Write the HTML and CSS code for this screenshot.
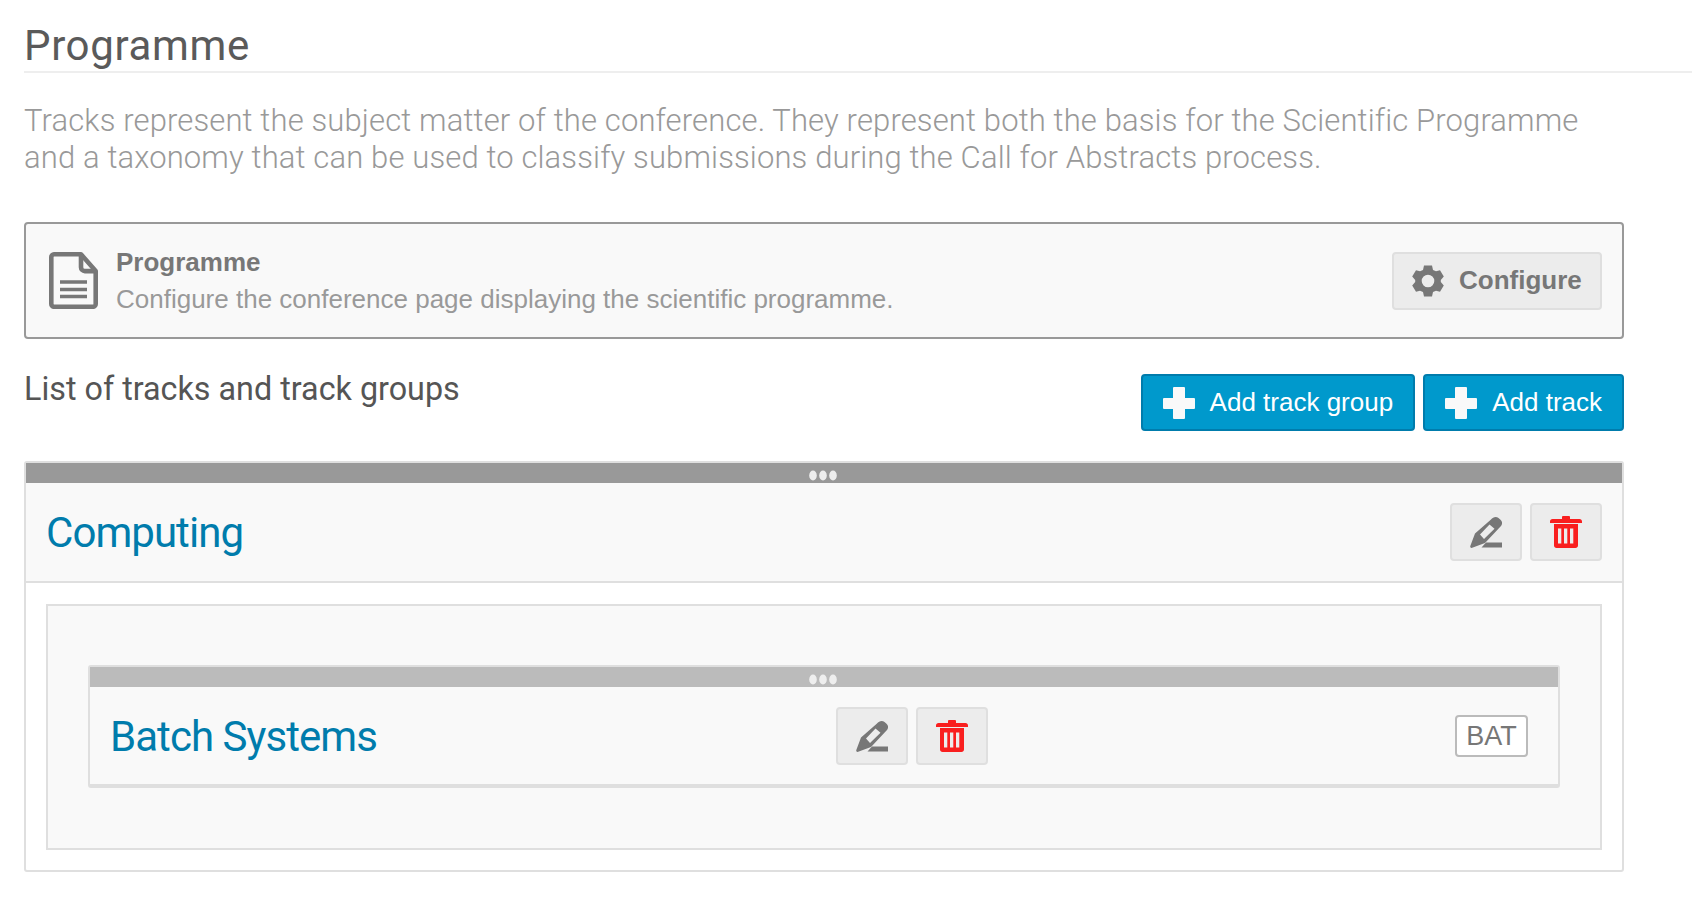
FILE: index.html
```html
<!DOCTYPE html>
<html lang="en">
<head>
<meta charset="utf-8">
<title>Programme</title>
<link rel="stylesheet" href="styles.css">
</head>
<body>
<main class="page">
  <h1 class="page-title">Programme</h1>
  <div class="content">
    <p class="intro">Tracks represent the subject matter of the conference. They represent both the basis for the Scientific Programme and a taxonomy that can be used to classify submissions during the Call for Abstracts process.</p>

    <section class="action-box">
      <svg class="doc-icon" viewBox="0 0 49 57"><path fill="none" stroke="#777" stroke-width="4.600" stroke-linejoin="round" d="M5 2.300h27l14.700 16.700v33a2.800 2.800 0 0 1-2.800 2.800H5a2.800 2.800 0 0 1-2.700-2.800V5a2.800 2.800 0 0 1 2.700-2.700z"/><path fill="none" stroke="#777" stroke-width="4.600" stroke-linejoin="round" d="M32 2.300v13a3.800 3.800 0 0 0 3.800 3.800h10.900"/><path stroke="#777" stroke-width="3.400" d="M11 30h27M11 37.500h27M11 44.500h27"/></svg>
      <div class="action-text">
        <div class="action-title">Programme</div>
        <div class="action-desc">Configure the conference page displaying the scientific programme.</div>
      </div>
      <button class="btn btn-config">
        <svg class="gear-icon" viewBox="0 0 32 32"><path fill="#777" fill-rule="evenodd" d="M12 .5L20 .5L21 5L24 6.200L28 5.200L31.800 11.500L28.800 15L28.800 17L31.800 20.500L28 26.800L24 25.800L21 27L20 31.500L12 31.500L11 27L8 25.800L4 26.800L.2 20.500L3.200 17L3.200 15L.2 11.500L4 5.200L8 6.200L11 5ZM16 9.700a6.300 6.300 0 1 0 0 12.600a6.300 6.300 0 0 0 0-12.600z"/></svg>
        Configure
      </button>
    </section>

    <div class="list-head">
      <h2 class="list-title">List of tracks and track groups</h2>
      <div class="list-actions">
        <button class="btn btn-primary"><svg class="plus-icon" viewBox="0 0 32 32"><path fill="#f9f9f9" d="M10 1a1 1 0 0 1 1-1h10a1 1 0 0 1 1 1v10h9a1 1 0 0 1 1 1v9a1 1 0 0 1-1 1h-9v9a1 1 0 0 1-1 1H11a1 1 0 0 1-1-1v-9H1a1 1 0 0 1-1-1v-9a1 1 0 0 1 1-1h9z"/></svg>Add track group</button>
        <button class="btn btn-primary"><svg class="plus-icon" viewBox="0 0 32 32"><path fill="#f9f9f9" d="M10 1a1 1 0 0 1 1-1h10a1 1 0 0 1 1 1v10h9a1 1 0 0 1 1 1v9a1 1 0 0 1-1 1h-9v9a1 1 0 0 1-1 1H11a1 1 0 0 1-1-1v-9H1a1 1 0 0 1-1-1v-9a1 1 0 0 1 1-1h9z"/></svg>Add track</button>
      </div>
    </div>

    <section class="group">
      <div class="handle handle-dark"><svg class="dots" viewBox="0 0 28 11"><ellipse cx="4" cy="5.500" rx="3.800" ry="5"/><ellipse cx="14" cy="5.500" rx="3.800" ry="5"/><ellipse cx="24" cy="5.500" rx="3.800" ry="5"/></svg></div>
      <div class="group-head">
        <a class="item-title">Computing</a>
        <div class="icon-btns">
          <button class="btn btn-icon"><svg class="icon" viewBox="0 0 32 32"><path fill="#777" fill-rule="evenodd" d="M21 3.500C23 1 26 0 28.500 2L30.500 3.800C32.500 5.500 32.500 8 31 10L15 27L1.500 32C.5 32 0 31 .3 30L5 17.500ZM10 18.500L19.500 8.500L24.500 12.800L14 23Z"/><path fill="#777" d="M16 26.500H32V31.500H11.500Z"/></svg></button>
          <button class="btn btn-icon"><svg class="icon" viewBox="0 0 32 32"><path fill="#f91f1f" fill-rule="evenodd" d="M13 0h6a1 1 0 0 1 1 1v2h9.500c1.500 0 2.500 1.200 2.500 2.500V7H0V5.500C0 4.200 1 3 2.500 3H12V1a1 1 0 0 1 1-1zM4 8h24v21.500c0 1.400-1.100 2.500-2.500 2.500h-19C5.100 32 4 30.900 4 29.500zM8 12.500v15h3.300v-15zm6 0v15h3.300v-15zm6 0v15h3.300v-15z"/></svg></button>
        </div>
      </div>
      <div class="group-body">
        <div class="track-list">
          <div class="track">
            <div class="handle handle-light"><svg class="dots" viewBox="0 0 28 11"><ellipse cx="4" cy="5.500" rx="3.800" ry="5"/><ellipse cx="14" cy="5.500" rx="3.800" ry="5"/><ellipse cx="24" cy="5.500" rx="3.800" ry="5"/></svg></div>
            <div class="track-row">
              <a class="item-title track-title">Batch Systems</a>
              <div class="icon-btns">
                <button class="btn btn-icon"><svg class="icon" viewBox="0 0 32 32"><path fill="#777" fill-rule="evenodd" d="M21 3.500C23 1 26 0 28.500 2L30.500 3.800C32.500 5.500 32.500 8 31 10L15 27L1.500 32C.5 32 0 31 .3 30L5 17.500ZM10 18.500L19.500 8.500L24.500 12.800L14 23Z"/><path fill="#777" d="M16 26.500H32V31.500H11.500Z"/></svg></button>
                <button class="btn btn-icon"><svg class="icon" viewBox="0 0 32 32"><path fill="#f91f1f" fill-rule="evenodd" d="M13 0h6a1 1 0 0 1 1 1v2h9.500c1.500 0 2.500 1.200 2.500 2.500V7H0V5.500C0 4.200 1 3 2.500 3H12V1a1 1 0 0 1 1-1zM4 8h24v21.500c0 1.400-1.100 2.500-2.500 2.500h-19C5.100 32 4 30.900 4 29.500zM8 12.500v15h3.300v-15zm6 0v15h3.300v-15zm6 0v15h3.300v-15z"/></svg></button>
              </div>
              <span class="code">BAT</span>
            </div>
          </div>
        </div>
      </div>
    </section>
  </div>
</main>
</body>
</html>
```
FILE: styles.css
```css
* { box-sizing: border-box; }
html, body { margin: 0; padding: 0; background: #fff; }
body { width: 1692px; height: 908px; overflow: hidden; font-family: "Liberation Sans", Arial, sans-serif; }
.page { padding-left: 24px; }
.page-title {
  margin: 0;
  height: 73px;
  padding-top: 19px;
  border-bottom: 2px solid #eee;
  font: 400 42px/54px Roboto, sans-serif;
  letter-spacing: .65px;
  color: #5a5a5a;
}
.content { width: 1600px; }
.intro {
  margin: 29px 0 0;
  width: 1590px;
  font: 300 31px/37px Roboto, sans-serif;
  letter-spacing: .13px;
  color: #999;
}
.action-box {
  display: flex;
  align-items: center;
  height: 117px;
  margin-top: 46px;
  padding: 0 20px 0 23px;
  background: #f9f9f9;
  border: 2px solid #999;
  border-radius: 4px;
}
.doc-icon { width: 49px; height: 57px; flex: none; }
.action-text { flex: 1; margin-left: 18px; }
.action-title { font-weight: 700; font-size: 26px; line-height: 36px; color: #777; }
.action-desc { font-size: 26px; line-height: 38px; color: #999; }
.btn {
  display: inline-flex;
  align-items: center;
  justify-content: center;
  border: 2px solid #dfdfdf;
  border-radius: 4px;
  background: #ececec;
  padding: 0;
  font-family: "Liberation Sans", Arial, sans-serif;
  font-size: 26px;
}
.btn-config { width: 210px; height: 58px; justify-content: flex-start; padding-left: 18px; color: #777; font-weight: 700; gap: 15px; }
.gear-icon { width: 32px; height: 32px; flex: none; }
.list-head { display: flex; justify-content: space-between; align-items: flex-start; margin-top: 35px; }
.list-title { margin: -7px 0 0; font: 400 32.300px/44px Roboto, sans-serif; color: #555; }
.list-actions { display: flex; gap: 8px; }
.btn-primary {
  height: 57px;
  padding: 0 20px;
  gap: 15px;
  background: #0099cc;
  border-color: #007cac;
  color: #fff;
}
.plus-icon { width: 32px; height: 32px; flex: none; }
.group {
  margin-top: 30px;
  border: 2px solid #dfdfdf;
  border-radius: 3px;
  width: 1600px;
  height: 411px;
}
.handle { display: flex; justify-content: center; align-items: flex-end; height: 20px; padding-right: 3px; }
.handle-dark { background: #999; }
.handle-light { background: #bbb; }
.dots { width: 28px; height: 11px; fill: #eee; margin-bottom: 2px; }
.group-head {
  display: flex;
  align-items: center;
  justify-content: space-between;
  height: 100px;
  padding: 0 20px;
  background: #f9f9f9;
  border-bottom: 2px solid #dfdfdf;
}
.item-title { padding-top: 2px; font: 400 42px/54px Roboto, sans-serif; letter-spacing: -.95px; color: #007cac; }
.icon-btns { display: flex; gap: 8px; }
.btn-icon { width: 72px; height: 58px; }
.icon { width: 32px; height: 32px; }
.group-body { padding: 21px 20px; }
.track-list {
  height: 246px;
  padding: 59px 40px 0;
  background: #f9f9f9;
  border: 2px solid #dfdfdf;
}
.track {
  height: 123px;
  border: 2px solid #dfdfdf;
  border-bottom-width: 4px;
  border-radius: 3px;
  background: #f9f9f9;
}
.track-row { display: flex; align-items: center; height: 97px; padding: 0 30px 0 20px; }
.track-title { width: 726px; flex: none; }
.code {
  margin-left: auto;
  width: 73px;
  height: 42px;
  padding-top: 1px;
  display: flex;
  align-items: center;
  justify-content: center;
  background: #fff;
  border: 2px solid #bbb;
  border-radius: 4px;
  font-size: 27px;
  color: #777;
}
```
